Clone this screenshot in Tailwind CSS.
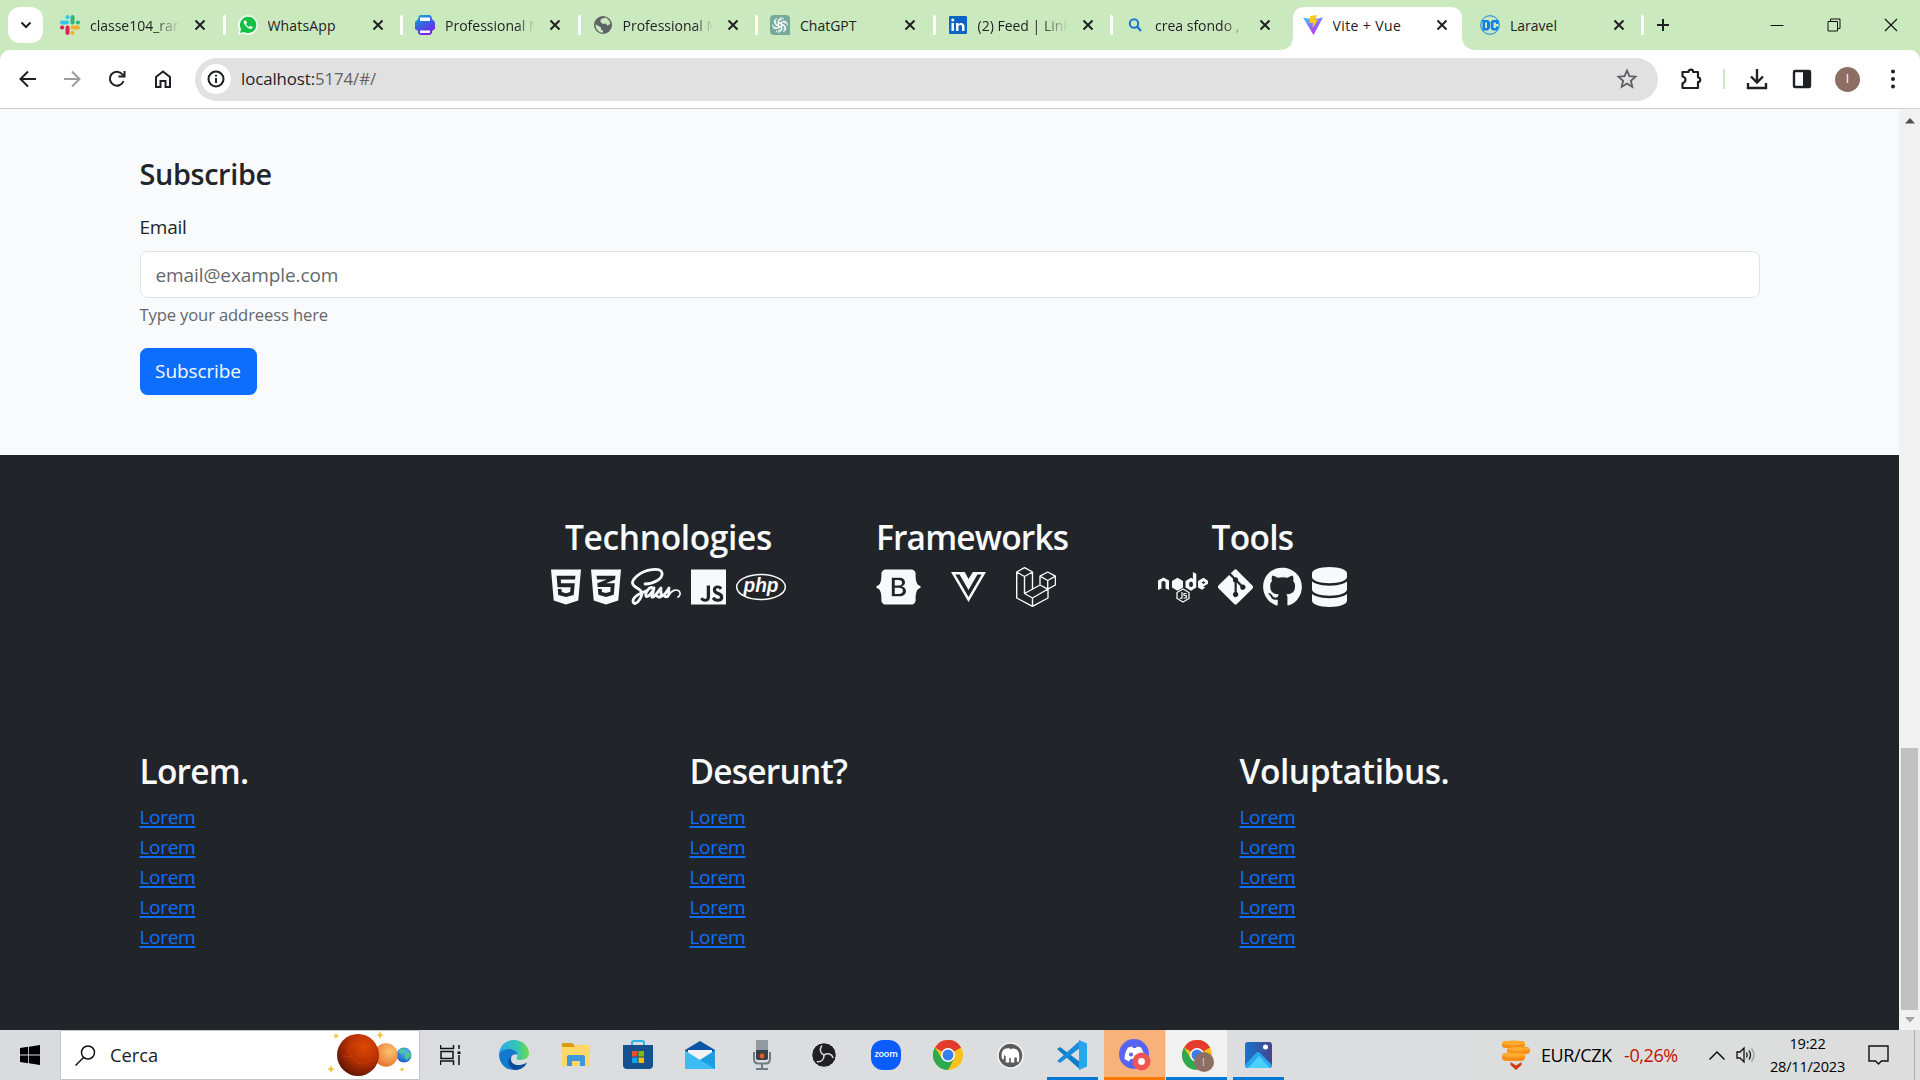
<!DOCTYPE html>
<html lang="it">
<head>
<meta charset="utf-8">
<title>Vite + Vue</title>
<script src="https://cdn.jsdelivr.net/npm/@tailwindcss/browser@4"></script>
</head>
<body class="w-[1920px] h-[1080px] overflow-hidden flex flex-col bg-white text-[#212529] font-['Open_Sans','Noto_Sans',sans-serif]">
<svg class="hidden">
  <defs>
    <symbol id="x" viewBox="0 0 12 12"><path d="M1.5 1.5l9 9M10.5 1.5l-9 9" stroke="#1f2023" stroke-width="2" fill="none"/></symbol>
    <symbol id="chrome" viewBox="0 0 30 30">
      <circle cx="15" cy="15" r="15" fill="#fbc116"/>
      <path d="M15 15L2 7.500A15 15 0 0 1 28 7.500z" fill="#e33b2e"/>
      <path d="M2 7.500A15 15 0 0 0 15 30L21.200 18.500 15 15 8.800 18.500z" fill="#2da94f"/>
      <path d="M15 8H28A15 15 0 0 0 15 0z" fill="#e33b2e"/>
      <circle cx="15" cy="15" r="7" fill="#fff"/><circle cx="15" cy="15" r="5.500" fill="#3b7ded"/>
    </symbol>
  </defs>
</svg>

<!-- Tab strip -->
<header class="relative h-[50px] shrink-0 bg-[#cbe9bf] flex items-center text-[14px] text-[#1f2023]">
  <svg class="absolute left-[1279px] top-0" width="198" height="50"><path d="M0 50Q14 50 14 36V19Q14 7 26 7H171Q183 7 183 19V36Q183 50 198 50z" fill="#fff"/></svg>
  <div class="ml-2 w-[35px] h-[36px] rounded-[12px] bg-white flex items-center justify-center"><svg width="12" height="8" viewBox="0 0 12 8"><path d="M1.500 1.500L6 6l4.500-4.500" fill="none" stroke="#1f2023" stroke-width="2"/></svg></div>
  <div class="ml-[3.500px] flex h-full items-center relative">
    <div class="w-[177.500px] flex items-center pl-[13.500px]">
      <svg width="20" height="20" viewBox="0 0 20 20" class="shrink-0"><g stroke-width="4" stroke-linecap="round"><path d="M2 7.500H7" stroke="#36c5f0"/><path d="M7.500 2V2.200" stroke="#36c5f0"/><path d="M12.500 2V7.500" stroke="#2eb67d"/><path d="M18 7.500H17.800" stroke="#2eb67d"/><path d="M12.500 12.500H18M12.500 18V17.800" stroke="#ecb22e"/><path d="M7.500 12.500V18M2 12.500H2.200" stroke="#e01e5a"/></g></svg>
      <span class="ml-[10px] w-[90px] overflow-hidden whitespace-nowrap mask-r-from-70%">classe104_random</span>
      <svg class="ml-[14px] shrink-0" width="12" height="12"><use href="#x"/></svg><i class="ml-auto -mr-[1.500px] w-[3px] h-5 rounded bg-white"></i>
    </div>
    <div class="w-[177.500px] flex items-center pl-[13.500px]">
      <svg width="20" height="20" viewBox="0 0 20 20" class="shrink-0"><path d="M0 20L1.300 14.900A9.800 9.800 0 1 1 5 18.600z" fill="#fff"/><path d="M2 18l1-4A8.200 8.200 0 1 1 6 17z" fill="#12c143"/><path d="M6.500 5.500c-1.500 1-.8 3.200 1.600 5.800 2.800 2.800 5.200 3.300 6.300 1.600l.2-1-2.200-1.100-1.200 1.200c-1.500-.6-2.700-1.800-3.200-3L9 7.800 8 5.500z" fill="#fff"/></svg>
      <span class="ml-[10px] w-[90px] overflow-hidden whitespace-nowrap tracking-[0.150px]">WhatsApp</span>
      <svg class="ml-[14px] shrink-0" width="12" height="12"><use href="#x"/></svg><i class="ml-auto -mr-[1.500px] w-[3px] h-5 rounded bg-white"></i>
    </div>
    <div class="w-[177.500px] flex items-center pl-[13.500px]">
      <svg width="20" height="20" viewBox="0 0 20 20" class="shrink-0"><defs><linearGradient id="pr" x1="0" y1="0" x2=".5" y2="1"><stop offset="0" stop-color="#14b8c9"/><stop offset=".5" stop-color="#3167e3"/><stop offset="1" stop-color="#7b24ea"/></linearGradient></defs><path d="M5 0H15Q17 1 17 4L20 7V14L17 16V18Q16 20 14 20H6Q4 20 3 18V16L0 14V7L3 4Q3 1 5 0z" fill="url(#pr)"/><path d="M5 2.500h10V6H5zM5 15.500h10V18H5z" fill="#fff"/></svg>
      <span class="ml-[10px] w-[90px] overflow-hidden whitespace-nowrap mask-r-from-80%">Professional Ma</span>
      <svg class="ml-[14px] shrink-0" width="12" height="12"><use href="#x"/></svg><i class="ml-auto -mr-[1.500px] w-[3px] h-5 rounded bg-white"></i>
    </div>
    <div class="w-[177.500px] flex items-center pl-[13.500px]">
      <svg width="20" height="20" viewBox="0 0 20 20" class="shrink-0"><circle cx="10" cy="10" r="9" fill="#5f6368"/><path d="M3 9.500l5 3v2l2 1v2.200A7.500 7.500 0 0 1 2.600 10zM8 4l5-1.500L16.500 6l.8 3-3 1.500-1.500-2-3 .5-2.500-2.500z" fill="#cbe9bf"/></svg>
      <span class="ml-[10px] w-[90px] overflow-hidden whitespace-nowrap mask-r-from-80%">Professional Ma</span>
      <svg class="ml-[14px] shrink-0" width="12" height="12"><use href="#x"/></svg><i class="ml-auto -mr-[1.500px] w-[3px] h-5 rounded bg-white"></i>
    </div>
    <div class="w-[177.500px] flex items-center pl-[13.500px]">
      <svg width="20" height="20" viewBox="0 0 20 20" class="shrink-0"><path d="M4 0H16Q20 0 20 4V20H4Q0 20 0 16V4Q0 0 4 0z" fill="#75a99c"/><g fill="none" stroke="#fff" stroke-width="1"><path id="petal" d="M8.500 11.500V5.800a3 3 0 0 1 5.500-1.500M8.500 8.700L12.500 6.500l3.500 2"/><use href="#petal" transform="rotate(60 10 10)"/><use href="#petal" transform="rotate(120 10 10)"/><use href="#petal" transform="rotate(180 10 10)"/><use href="#petal" transform="rotate(240 10 10)"/><use href="#petal" transform="rotate(300 10 10)"/></g></svg>
      <span class="ml-[10px] w-[90px] overflow-hidden whitespace-nowrap">ChatGPT</span>
      <svg class="ml-[14px] shrink-0" width="12" height="12"><use href="#x"/></svg><i class="ml-auto -mr-[1.500px] w-[3px] h-5 rounded bg-white"></i>
    </div>
    <div class="w-[177.500px] flex items-center pl-[13.500px]">
      <svg width="20" height="20" viewBox="0 0 20 20" class="shrink-0"><rect x="1" y="1" width="18" height="18" rx="1" fill="#0a66c2"/><path d="M3.500 8H6v8H3.500zM8 8h2.500v1.200C12.500 7 16.500 7.500 16.500 11.500V16H14v-4.200c0-2.400-3.500-2.400-3.500 0V16H8z" fill="#fff"/><circle cx="4.750" cy="5" r="1.500" fill="#fff"/></svg>
      <span class="ml-[10px] w-[90px] overflow-hidden whitespace-nowrap mask-r-from-70%">(2) Feed | LinkedIn</span>
      <svg class="ml-[14px] shrink-0" width="12" height="12"><use href="#x"/></svg><i class="ml-auto -mr-[1.500px] w-[3px] h-5 rounded bg-white"></i>
    </div>
    <div class="w-[177.500px] flex items-center pl-[13.500px]">
      <svg width="20" height="20" viewBox="0 0 20 20" class="shrink-0"><circle cx="9" cy="8.500" r="4.200" fill="none" stroke="#1a73d0" stroke-width="2"/><path d="M12 11.500l4 4.500" stroke="#1a73d0" stroke-width="2.200"/></svg>
      <span class="ml-[10px] w-[90px] overflow-hidden whitespace-nowrap mask-r-from-75%">crea sfondo , bi</span>
      <svg class="ml-[14px] shrink-0" width="12" height="12"><use href="#x"/></svg>
    </div>
    <div class="w-[177.500px] flex items-center pl-[13.500px]">
      <svg width="20" height="20" viewBox="0 0 20 20" class="shrink-0"><defs><linearGradient id="vt" x1="0" y1="0" x2=".6" y2="1"><stop offset="0" stop-color="#41c5ff"/><stop offset="1" stop-color="#c12bff"/></linearGradient></defs><path d="M0 2.500L10 4.500l10-2L10.500 20z" fill="url(#vt)"/><path d="M7 1l7-1-1.500 5H15l-5.500 8 .5-5H6.500z" fill="#ffc61c"/></svg>
      <span class="ml-[10px] w-[90px] overflow-hidden whitespace-nowrap tracking-[0.400px]">Vite + Vue</span>
      <svg class="ml-[13px] shrink-0" width="12" height="12"><use href="#x"/></svg>
    </div>
    <div class="w-[177px] flex items-center pl-[13.500px]">
      <svg width="20" height="20" viewBox="0 0 20 20" class="shrink-0"><circle cx="10" cy="10" r="9.300" fill="none" stroke="#1181e8" stroke-width="1"/><path d="M1.500 5H8l2 2V13L8 15.500H1.500l1-1.500V6.500zM12.500 5H18.500V9H16V7.500H13.500V13H16V11.500H18.500L17.500 15.500H12.500L10.700 13.500V7z" fill="#1181e8"/><path d="M5 7.500H7V13H5z" fill="#cbe9bf"/></svg>
      <span class="ml-[10px] w-[90px] overflow-hidden whitespace-nowrap">Laravel</span>
      <svg class="ml-[13px] shrink-0" width="12" height="12"><use href="#x"/></svg><i class="ml-auto w-[3px] h-5 rounded bg-white"></i>
    </div>
  </div>
  <svg class="ml-[12.500px]" width="14" height="14"><path d="M7 1V13M1 7H13" stroke="#1f2023" stroke-width="2"/></svg>
  <div class="ml-auto mr-[22px] flex items-center gap-[43px]">
    <svg width="14" height="14"><path d="M.5 7.500H13.500" stroke="#111"/></svg>
    <svg width="14" height="14" fill="none" stroke="#111"><path d="M1 3.500H10.500V13H1zM3.500 3V1H13V10.500H11"/></svg>
    <svg width="14" height="14"><path d="M1 1L13 13M13 1L1 13" stroke="#111" stroke-width="1.200"/></svg>
  </div>
</header>

<!-- Toolbar -->
<nav class="h-[59px] shrink-0 bg-[#cbe9bf]">
  <div class="h-full bg-white rounded-t-[10px] border-b border-[#cdd0ce] flex items-center pl-[18px] pr-[19px]">
    <svg width="20" height="20" fill="none" stroke="#1f2023" stroke-width="2"><path d="M18 10H3M10 2.500L2.500 10 10 17.500"/></svg>
    <svg class="ml-6" width="20" height="20" fill="none" stroke="#9c9c9c" stroke-width="2"><path d="M2 10H17M10 2.500L17.500 10 10 17.500"/></svg>
    <svg class="ml-[25px]" width="20" height="20" fill="none" stroke="#1f2023" stroke-width="2"><path d="M16.500 12A7 7 0 1 1 15.500 5.500L17 7"/><path d="M17.500 2V7.500H11.500" /></svg>
    <svg class="ml-[25.500px]" width="20" height="20" fill="none" stroke="#1f2023" stroke-width="2"><path d="M3 8L10 2.500 17 8V18H12.500V12H7.500V18H3z"/></svg>
    <div class="ml-[22.500px] w-[1463px] h-[43px] rounded-full bg-[#e1e1e1] flex items-center pl-[6px] pr-[20px]">
      <div class="w-[30px] h-[30px] rounded-full bg-white flex items-center justify-center"><svg width="18" height="18" fill="none" stroke="#1f2023" stroke-width="2"><circle cx="9" cy="9" r="7.500"/><path d="M9 8V13M9 4.800V6.500"/></svg></div>
      <span class="ml-[10px] text-[16.800px] tracking-[-0.070px] text-[#1f2023]">localhost:<span class="text-[#606264]">5174/#/</span></span>
      <svg class="ml-auto" width="22" height="22" viewBox="0 0 22 22"><path d="M11 2.500L13.400 8.200 19.500 8.700 14.900 12.800 16.300 18.900 11 15.600 5.700 18.900 7.100 12.800 2.500 8.700 8.600 8.200z" fill="none" stroke="#5c5e61" stroke-width="1.800"/></svg>
    </div>
    <svg class="ml-[21px]" width="24" height="24" viewBox="0 0 24 24"><path d="M4 5H9.500a2.300 2.300 0 0 1 4.600 0H19V10.500a2 2 0 0 1 0 4.500V21H3.500V16.200C7.500 15 7.500 10.500 3.500 9.500V5z" fill="none" stroke="#1f2023" stroke-width="2.200" stroke-linejoin="round"/></svg>
    <i class="ml-[20px] w-[2px] h-5 bg-[#cbe9bf]"></i>
    <svg class="ml-[21px]" width="22" height="22" fill="none" stroke="#1f2023" stroke-width="2.400"><path d="M11 1V14M5 8.500L11 14.500 17 8.500M2 15V20H20V15"/></svg>
    <svg class="ml-[24px]" width="20" height="20"><rect x="2" y="2" width="16" height="16" rx="1" fill="none" stroke="#1f2023" stroke-width="2.400"/><path d="M11 2H18V18H11z" fill="#1f2023"/></svg>
    <div class="ml-[23px] w-[25px] h-[25px] rounded-full bg-[#8d6e63] text-white text-[12px] flex items-center justify-center">I</div>
    <svg class="ml-auto" width="16" height="20" fill="#1f2023"><circle cx="8" cy="2.500" r="2"/><circle cx="8" cy="10" r="2"/><circle cx="8" cy="17.500" r="2"/></svg>
  </div>
</nav>

<div class="flex h-[921px] shrink-0">
  <main class="w-[1899px]">
    <section class="h-[346px] bg-[#f8fafc] pl-[139.500px] pr-[139.500px] pt-[47px] flex flex-col items-start">
      <h4 class="text-[28.800px] leading-[36px] font-semibold tracking-[-0.350px]">Subscribe</h4>
      <label class="mt-[20px] text-[19px] leading-[30px] tracking-[-0.250px]">Email</label>
      <input class="mt-[9px] w-full h-[47px] rounded-[7.500px] border border-[#dee2e6] bg-white px-[15px] text-[19px] tracking-[-0.100px] placeholder:text-[#63686c]" placeholder="email@example.com">
      <small class="mt-[4px] text-[16.600px] leading-[26px] tracking-[-0.130px] text-[#63686c]">Type your addreess here</small>
      <button class="mt-[20px] h-[47px] w-[117px] rounded-[7.500px] bg-[#0d6efd] text-[#f8fafc] text-[19px] tracking-[-0.100px]">Subscribe</button>
    </section>

    <footer class="h-[575px] bg-[#212529] text-[#f8f9fa]">
      <div class="flex pl-[551px] pt-[61px] h-[281px]">
        <div class="w-[235px] flex flex-col items-center">
          <h3 class="text-[33.500px] leading-[42px] font-semibold whitespace-nowrap tracking-[-0.350px]">Technologies</h3>
          <div class="mt-[9px] flex gap-[10px] fill-[#f8f9fa]">
            <svg width="30" height="40" viewBox="0 0 384 512"><path d="M0 32l34.9 395.8L191.5 480l157.600-52.200L384 32H0zm308.200 127.900H124.400l4.100 49.400h175.600l-13.600 148.400-97.900 27v.3h-1.100l-98.700-27.300-6-75.800h47.700L138 320l53.500 14.500 53.700-14.500 6-62.200H84.300L71.500 112.200h241.100l-4.400 47.700z"/></svg>
            <svg width="30" height="40" viewBox="0 0 384 512"><path d="M0 32l34.9 395.8L192 480l157.100-52.200L384 32H0zm313.100 80l-4.800 47.300L193 208.600l-.3.1h111.500l-12.800 146.600-98.200 28.700-98.800-29.200-6.400-73.900h48.900l3.200 38.300 52.600 13.300 54.700-15.400 3.700-61.600-166.300-.5v-.1l-.2.1-3.600-46.300L193.100 162l6.500-2.700H76.700L70.900 112h242.200z"/></svg>
            <svg width="50" height="40" viewBox="0 0 50 40" fill="none" stroke="#f8f9fa" stroke-linecap="round" stroke-linejoin="round"><path d="M14 17C22 17 32 12 31 6C30 0 14 2 6 9C-1 15 1 18 6 21C12 24 12 27 9 32C6 37 2 38 2 34C2 29 10 26 15 24" stroke-width="2.800"/><path d="M22 21C18 19 14 26 15 29C16 31 21 27 23 21L21 30C24 31 27 24 30 21C29 26 31 26 30 29C29 31 27 30 26 29M31 29C34 28 36 24 38 21C37 26 39 27 37 29C36 30 34 30 34 29" stroke-width="2.900"/><path d="M38 28C41 23 45 22 48 24C50 26 49 29 47 30" stroke-width="1.700"/></svg>
            <svg width="35" height="40" viewBox="0 0 448 512"><path d="M0 32v448h448V32H0zm243.800 349.400c0 43.600-25.600 63.500-62.900 63.500-33.700 0-53.200-17.400-63.200-38.500l34.300-20.700c6.600 11.700 12.600 21.600 27.100 21.600 13.800 0 22.600-5.400 22.600-26.500V237.700h42.100v143.700zm99.600 63.500c-39.100 0-64.400-18.600-76.700-43l34.300-19.800c9 14.700 20.800 25.600 41.500 25.600 17.400 0 28.600-8.700 28.600-20.800 0-14.400-11.400-19.500-30.700-28l-10.500-4.500c-30.400-12.900-50.500-29.200-50.500-63.500 0-31.600 24.100-55.600 61.600-55.600 26.800 0 46 9.300 59.800 33.700L368 290c-7.200-12.900-15-18-27.100-18-12.300 0-20.100 7.800-20.100 18 0 12.600 7.800 17.700 25.900 25.600l10.500 4.500c35.800 15.300 55.900 31 55.900 66.200 0 37.800-29.800 58.600-69.700 58.600z"/></svg>
            <svg width="50" height="40" viewBox="0 0 50 40"><ellipse cx="25" cy="20" rx="24.300" ry="12.500" fill="none" stroke="#f8f9fa" stroke-width="1.500"/><text x="7.500" y="24.500" textLength="35" lengthAdjust="spacingAndGlyphs" class="font-['Liberation_Sans',sans-serif] text-[20px] font-bold italic">php</text></svg>
          </div>
        </div>
        <div class="ml-[90px] w-[192px] flex flex-col items-start">
          <h3 class="text-[33.500px] leading-[42px] font-semibold whitespace-nowrap tracking-[-0.850px]">Frameworks</h3>
          <div class="mt-[9px] flex gap-[30px] fill-[#f8f9fa]">
            <svg width="45" height="40" viewBox="0 0 576 512"><path d="M333.500 201.400c0-22.100-15.600-34.300-43-34.300h-50.400v71.200h42.500C315.400 238.200 333.500 225 333.500 201.400zM517 188.600c-9.500-30.900-10.900-68.800-9.800-98.100 1.100-30.500-22.700-58.500-54.700-58.500H123.700c-32.100 0-55.800 28.100-54.700 58.500 1 29.300-.3 67.200-9.800 98.100-9.600 31-25.700 50.600-52.200 53.100v28.500c26.400 2.500 42.600 22.100 52.200 53.100 9.500 30.900 10.900 68.800 9.800 98.100-1.100 30.500 22.700 58.500 54.700 58.500h328.700c32.100 0 55.800-28.100 54.700-58.500-1-29.300.3-67.200 9.800-98.100 9.600-31 25.700-50.600 52.100-53.100v-28.500C542.700 239.200 526.500 219.600 517 188.600zM300.200 375.100h-97.900V136.800h97.400c43.300 0 71.700 23.400 71.700 59.400 0 25.300-19.100 47.900-43.500 51.800v1.300c33.200 3.600 55.500 26.600 55.500 58.300C383.400 349.700 352.100 375.100 300.200 375.100zM290.200 266.400h-50.100v78.400h52.300c34.200 0 52.300-13.700 52.300-39.500C344.700 279.600 326.100 266.400 290.200 266.400z"/></svg>
            <svg width="35" height="40" viewBox="0 0 448 512"><path d="M356.900 64.300H280l-56 88.600-48-88.600H0L224 448 448 64.300h-91.100zm-301.200 32h53.800L224 294.500 338.400 96.300h53.800L224 384.500 55.700 96.300z"/></svg>
            <svg width="40" height="40" viewBox="0 0 40 40" fill="none" stroke="#f8f9fa" stroke-width="1.400" stroke-linejoin="round"><path d="M.7 5L8.500.6 16.500 5 8.500 9.500zV31L16.500 39.400 32 31V22M8.500 9.500V26.500L16.500 31V39.400M16.500 5V22M8.500 26.500L24 18M16.500 31L32 22M24 9.200L31.700 5 39.400 9.200V18L31.700 22.200 24 18V9.200L31.700 13.500 39.400 9.200M31.700 13.500V22"/></svg>
          </div>
        </div>
        <div class="ml-[89.500px] w-[190px] flex flex-col items-center">
          <h3 class="text-[33.500px] leading-[42px] font-semibold whitespace-nowrap tracking-[-0.700px]">Tools</h3>
          <div class="mt-[9px] flex gap-[10px] fill-[#f8f9fa]">
            <svg width="50" height="40" viewBox="0 0 50 40"><path d="M0 23V13.500L5.500 10.500 11 13.500V23L7.500 21.500V15L5.500 13.700 3.500 15V21.500zM14 14L19.500 10.800 25 14V20.500L19.500 23.700 14 20.500zM27.500 14L33 10.800 34.900 12V5L38.300 6.800V20.500L33 23.700 27.500 20.500zM31.200 15.700V19L33 20.200 34.900 19V15.700L33 14.500zM40 14L45.500 10.800 50.500 14V16.500L45.500 19.500 47 20.700 44 22.800 40 20.500z" fill-rule="evenodd"/><path d="M43.500 15.500L45.500 14.300 47.500 15.500 45.500 17z" fill="#212529"/><path d="M25 22L31 25.500V31.500L25 35 19 31.500V25.500z" fill="#212529" stroke="#f8f9fa" stroke-width="1.300"/><path d="M24 25V30.500Q24 32 21.800 31M28.500 26.500H26V28.500H28.300V31H25.500" fill="none" stroke="#f8f9fa" stroke-width="1.200"/></svg>
            <svg width="35" height="40" viewBox="0 0 448 512"><path d="M439.550 236.050L244 40.450a28.870 28.870 0 0 0-40.810 0l-40.660 40.630 51.520 51.520c27.060-9.140 52.680 16.770 43.390 43.680l49.660 49.660c34.230-11.800 61.180 31 35.470 56.690-26.490 26.490-70.210-2.870-56-37.340L240.220 199v121.850c25.300 12.540 22.260 41.850 9.080 55a34.340 34.340 0 0 1-48.550 0c-17.570-17.600-11.070-46.910 11.250-56v-123c-20.800-8.510-24.600-30.740-18.640-45L142.570 101 8.450 235.140a28.860 28.860 0 0 0 0 40.810l195.610 195.600a28.860 28.860 0 0 0 40.800 0l194.690-194.690a28.860 28.860 0 0 0 0-40.810z"/></svg>
            <svg width="39" height="40" viewBox="0 0 496 512"><path d="M165.900 397.400c0 2-2.300 3.600-5.200 3.600-3.300.3-5.600-1.300-5.600-3.600 0-2 2.300-3.600 5.200-3.600 3-.3 5.600 1.300 5.600 3.600zm-31.100-4.500c-.7 2 1.300 4.300 4.300 4.900 2.600 1 5.600 0 6.200-2s-1.300-4.300-4.300-5.200c-2.600-.7-5.500.3-6.200 2.300zM244.800 8C106.100 8 0 113.300 0 252c0 110.900 69.800 205.800 169.500 239.200 12.800 2.300 17.300-5.600 17.300-12.100 0-6.200-.3-40.400-.3-61.400 0 0-70 15-84.700-29.800 0 0-11.400-29.100-27.800-36.600 0 0-22.900-15.700 1.600-15.400 0 0 24.900 2 38.600 25.800 21.900 38.600 58.600 27.500 72.900 20.900 2.300-16 8.800-27.100 16-33.700-55.900-6.200-112.300-14.300-112.300-110.500 0-27.500 7.600-41.300 23.600-58.900-2.600-6.500-11.100-33.300 2.600-67.900 20.900-6.500 69 27 69 27 20-5.600 41.500-8.500 62.800-8.500s42.800 2.900 62.800 8.500c0 0 48.100-33.600 69-27 13.700 34.700 5.200 61.400 2.600 67.900 16 17.700 25.800 31.500 25.800 58.900 0 96.500-58.900 104.200-114.800 110.500 9.200 7.900 17 22.900 17 46.400 0 33.700-.3 75.400-.3 83.600 0 6.500 4.600 14.400 17.300 12.100C428.200 457.800 496 362.900 496 252 496 113.300 383.500 8 244.800 8z"/></svg>
            <svg width="35" height="40" viewBox="0 0 448 512"><path d="M448 80v48c0 44.200-100.300 80-224 80S0 172.200 0 128V80C0 35.800 100.300 0 224 0S448 35.800 448 80zM393.200 214.700c20.800-7.400 39.900-16.900 54.800-28.600V288c0 44.200-100.300 80-224 80S0 332.200 0 288V186.100c14.900 11.800 34 21.200 54.800 28.600C99.700 230.700 159.500 240 224 240s124.300-9.300 169.200-25.300zM0 346.100c14.900 11.800 34 21.200 54.800 28.600C99.700 390.700 159.500 400 224 400s124.300-9.300 169.200-25.300c20.800-7.400 39.900-16.900 54.800-28.600V432c0 44.200-100.300 80-224 80S0 476.200 0 432V346.100z"/></svg>
          </div>
        </div>
      </div>
      <div class="grid grid-cols-3 w-[1650px] ml-[139.500px] pt-[14px]">
        <div>
          <h3 class="text-[33.500px] leading-[42px] font-semibold tracking-[-0.800px]">Lorem.</h3>
          <ul class="mt-[10px] text-[19px] leading-[30px] tracking-[-0.300px] text-[#0d6efd] underline decoration-2 underline-offset-2"><li>Lorem</li><li>Lorem</li><li>Lorem</li><li>Lorem</li><li>Lorem</li></ul>
        </div>
        <div>
          <h3 class="text-[33.500px] leading-[42px] font-semibold tracking-[-0.800px]">Deserunt?</h3>
          <ul class="mt-[10px] text-[19px] leading-[30px] tracking-[-0.300px] text-[#0d6efd] underline decoration-2 underline-offset-2"><li>Lorem</li><li>Lorem</li><li>Lorem</li><li>Lorem</li><li>Lorem</li></ul>
        </div>
        <div>
          <h3 class="text-[33.500px] leading-[42px] font-semibold tracking-[-0.450px]">Voluptatibus.</h3>
          <ul class="mt-[10px] text-[19px] leading-[30px] tracking-[-0.300px] text-[#0d6efd] underline decoration-2 underline-offset-2"><li>Lorem</li><li>Lorem</li><li>Lorem</li><li>Lorem</li><li>Lorem</li></ul>
        </div>
      </div>
    </footer>
  </main>
  <!-- Scrollbar -->
  <aside class="w-[21px] bg-[#f1f1f1] flex flex-col items-center">
    <svg class="mt-[9px]" width="10" height="6"><path d="M0 5.500L5 0 10 5.500z" fill="#505050"/></svg>
    <div class="mt-[624px] w-[17px] h-[262px] bg-[#c1c1c1]"></div>
    <svg class="mt-[7px]" width="10" height="6"><path d="M0 0H10L5 5.500z" fill="#a3a3a3"/></svg>
  </aside>
</div>

<!-- Taskbar -->
<div class="h-[50px] shrink-0 flex items-center bg-linear-to-r from-[#d9dbdf] via-[#dcdddf] to-[#dcdddc] text-black">
  <svg class="ml-5" width="20" height="20"><path d="M0 3L8.200 1.800V9.500H0zM9 1.700L20 0V9.500H9zM0 10.500H8.200V18.200L0 17zM9 10.500H20V20L9 18.300z"/></svg>
  <div class="ml-5 w-[360px] h-[50px] bg-white border border-[#c4c5c8] flex items-center pl-[14px]">
    <svg width="21" height="21" fill="none" stroke="#111" stroke-width="1.500"><circle cx="13" cy="7.500" r="6.500"/><path d="M8.500 12.500L.5 20.500"/></svg>
    <span class="ml-[14px] text-[18.300px] text-[#1c1c1c]">Cerca</span>
    <svg class="ml-auto mr-[5px]" width="88" height="48" viewBox="0 0 88 48">
      <defs><radialGradient id="p1" cx=".65" cy=".3" r=".8"><stop offset="0" stop-color="#e04a05"/><stop offset=".5" stop-color="#b52f02"/><stop offset="1" stop-color="#501204"/></radialGradient><radialGradient id="p2" cx=".65" cy=".35" r=".7"><stop offset="0" stop-color="#ffc573"/><stop offset="1" stop-color="#e4722c"/></radialGradient><radialGradient id="p3" cx=".6" cy=".3" r=".7"><stop offset="0" stop-color="#55b8f5"/><stop offset="1" stop-color="#1c63c5"/></radialGradient></defs>
      <circle cx="78" cy="24" r="7.500" fill="url(#p3)"/><path d="M73 19l4-2 2 3-3 3-3-1zM79 23l5-2 1 4-4 4-2-2z" fill="#4bc98b"/>
      <circle cx="60" cy="24" r="11.700" fill="url(#p2)"/><circle cx="32" cy="24" r="21" fill="url(#p1)"/>
      <path d="M24 10L34 14 40 9M17 25L26 26 34 33 47 29M27 12L22 20 26 26" fill="none" stroke="#d1450d" stroke-width="1.200" opacity=".5"/>
      <path d="M10 2l1 2 2 1-2 1-1 2-1-2-2-1 2-1zM54 0l1.200 3 2.500 1-2.500 1.200L54 8l-1.200-2.800L50.300 4l2.500-1zM5 34l1.200 3 2.800 1-2.800 1.200L5 42l-1.200-2.800L1 38l2.800-1zM76 36l.8 1.700 1.800.8-1.800.8L76 41l-.8-1.700-1.800-.8 1.800-.8z" fill="#efc342"/>
    </svg>
  </div>
  <svg class="ml-5" width="21" height="20" fill="none" stroke="#111" stroke-width="1.500"><path d="M.5 0V3.500H13.500V0M1 6.500H13V13.500H1zM.5 20V16H13.500V20M19 0V4M19 10V20"/><path d="M17.500 6.500H20.500V9H17.500z" fill="#111" stroke="none"/></svg>

  <div class="ml-[22px] flex h-full items-center">
    <div class="w-[62px] flex justify-center"><svg width="30" height="30" viewBox="0 0 30 30"><defs><linearGradient id="e1" x1="0" x2="1"><stop offset="0" stop-color="#29a9e8"/><stop offset=".6" stop-color="#35c5b5"/><stop offset="1" stop-color="#70dc48"/></linearGradient></defs><path d="M0 14C1 5 7 0 15 0 24 0 30 7 30 13 30 18 26 20 21 20 17 20 17 18 18.500 16 19 12 15 9 10 9 5 9 2 11 0 14z" fill="url(#e1)"/><path d="M0 14C2 10 6 9 10 9 15 9 19 12 18.500 15 16 13 12 15 12 19 12 25 19 28 27 24 23 29 18 30 15 30 6 30 0 23 0 14z" fill="#1279cf"/><path d="M12 17C10 24 18 28 28 22.500 25 29 19 30 16 30 9 27 7 20 12 17z" fill="#0c4f97"/></svg></div>
    <div class="w-[62px] flex justify-center"><svg width="28" height="24" viewBox="0 0 28 24"><path d="M0 0H10L13 3V8H0z" fill="#dc9a0f"/><path d="M0 4H12L14 2H28V23H0z" fill="#ffd869"/><path d="M5 23V14Q5 12 7 12H21Q23 12 23 14V23H18V18H10V23z" fill="#3d97db"/></svg></div>
    <div class="w-[62px] flex justify-center"><svg width="30" height="30" viewBox="0 0 30 30"><path d="M9 6V3Q9 1 11 1H19Q21 1 21 3V6" fill="none" stroke="#29b6ee" stroke-width="2"/><path d="M0 5H30V25Q30 29 26 29H4Q0 29 0 25z" fill="#15508f"/><path d="M9 11h5.500v5.500H9z" fill="#f04e24"/><path d="M15.500 11H21v5.500h-5.500z" fill="#80bc06"/><path d="M9 17.500h5.500V23H9z" fill="#05a6f0"/><path d="M15.500 17.500H21V23h-5.500z" fill="#ffb901"/></svg></div>
    <div class="w-[62px] flex justify-center"><svg width="30" height="28" viewBox="0 0 30 28"><path d="M0 9L15 0 30 9V14H0z" fill="#0a56a5"/><path d="M3 9H27V18L15 22 3 17z" fill="#f3f3f5"/><path d="M0 9.500L15 19 30 9.500V28H0z" fill="#3cbcf3"/><path d="M15 19L30 28V9.500z" fill="#1d9de0"/></svg></div>
    <div class="w-[62px] flex justify-center"><svg width="18" height="30" viewBox="0 0 18 30"><path d="M3 0H15V12H3z" fill="#909aa3"/><path d="M3 10H15V18Q15 20 13 20H5Q3 20 3 18z" fill="#38414a"/><path d="M1 12V19Q1 23.500 5.500 23.500H12.500Q17 23.500 17 19V12M9 23.500V28M3 29H15" fill="none" stroke="#6f7c85" stroke-width="2"/><circle cx="9" cy="16" r="2.400" fill="#ef5b22"/></svg></div>
    <div class="w-[62px] flex justify-center"><svg width="26" height="26" viewBox="0 0 26 26"><circle cx="13" cy="13" r="12.300" fill="#202022" stroke="#f2f2f2" stroke-width="1"/><g fill="none" stroke="#d7d7d7" stroke-width="1.500"><path d="M13 13C9 11 8 7 11 3.500"/><path d="M13 13C9 11 8 7 11 3.500" transform="rotate(120 13 13)"/><path d="M13 13C9 11 8 7 11 3.500" transform="rotate(240 13 13)"/></g></svg></div>
    <div class="w-[62px] flex justify-center"><div class="w-[30px] h-[30px] rounded-[12px] bg-[#0b5cff] text-white text-[9px] leading-[27px] tracking-[-0.200px] font-semibold text-center">zoom</div></div>
    <div class="w-[62px] flex justify-center"><svg width="30" height="30"><use href="#chrome"/></svg></div>
    <div class="w-[62px] flex justify-center"><svg width="27" height="27" viewBox="0 0 27 27"><circle cx="13.500" cy="13.500" r="12.500" fill="#5c5c5c" stroke="#f5f5f5" stroke-width="1.500"/><path d="M4.800 16C4 10 6 6.500 10 6.500 12 6 13 6 13.500 7.500 15 6 19 6 21 9 22.500 11 22.500 16 22 19.500Q21 21 19.800 19.500V15.500H17.300V20.500H13.800V16H12.200V20.500H8.700V14.500Q7.500 14 7 12 6.800 14 7 16.500 6 18.500 4.800 16z" fill="#fff"/></svg></div>
    <div class="w-[62px] h-full flex items-center justify-center relative"><svg width="30" height="30" viewBox="0 0 30 30"><path d="M0 9L3 7 23 22V29.500z" fill="#0f7ec8"/><path d="M0 21L3 23 23 8V.5z" fill="#1a8cd8"/><path d="M22 0L30 3.500V26.500L22 30z" fill="#29a5f0"/></svg><i class="absolute bottom-0 w-[51px] h-[3px] bg-[#0078d4]"></i></div>
    <div class="ml-[1px] w-[61px] h-full bg-[#f9b17a] border-b-[3px] border-[#ff7800] flex items-center justify-center pt-[3px]"><svg width="32" height="32" viewBox="0 0 32 32"><circle cx="15" cy="15" r="15" fill="#5865f2"/><path d="M9 8.500L13 7.500 14 9H17L18 7.500 22 8.500Q25.500 14 25.500 20L21 22.500 19.500 20H11.500L10 22.500 5.500 20Q5.500 14 9 8.500z" fill="#fff"/><circle cx="12" cy="15.500" r="2" fill="#5865f2"/><circle cx="22.500" cy="22.500" r="9" fill="#f05455"/><circle cx="22.500" cy="22.500" r="3.400" fill="#fff"/></svg></div>
    <div class="ml-[1px] w-[61px] h-full bg-[#f1f1f1] border-b-[3px] border-[#0078d4] flex items-center justify-center pt-[3px]"><div class="relative"><svg width="30" height="30"><use href="#chrome"/></svg><div class="absolute left-[12px] top-[12px] w-5 h-5 rounded-full bg-[#8d6e63] text-[#d9cdc9] text-[10px] leading-5 text-center">I</div></div></div>
    <div class="w-[62px] h-full flex items-center justify-center relative"><svg width="27" height="26" viewBox="0 0 27 26"><defs><linearGradient id="ph" x1="0" x2="1"><stop offset="0" stop-color="#1775cc"/><stop offset="1" stop-color="#46458f"/></linearGradient></defs><rect width="27" height="26" rx="3" fill="url(#ph)"/><path d="M0 23L11 11Q13 9 15 11L27 23Q26 26 24 26H3Q0 26 0 23z" fill="#2aa8ee"/><path d="M3 26L14 14 25 26z" fill="#4bd0fb"/><circle cx="20.500" cy="5" r="2.500" fill="#fff"/></svg><i class="absolute bottom-0 w-[51px] h-[3px] bg-[#0078d4]"></i></div>
  </div>

  <div class="ml-auto flex h-full items-center">
    <svg width="28" height="30" viewBox="0 0 28 30"><g fill="#f78e16"><rect y="1" width="23" height="7" rx="3.500"/><rect x="5" y="7" width="23" height="7" rx="3.500"/><rect y="13" width="23" height="8" rx="4"/></g><g fill="#ffab2d"><ellipse cx="11.500" cy="3" rx="11.500" ry="2.500"/><ellipse cx="16.500" cy="9" rx="11.500" ry="2"/><ellipse cx="11.500" cy="15" rx="11.500" ry="2.500"/></g><path d="M8.500 22L14 25.500 19.500 22V25L14 30 8.500 25z" fill="#ce3b15"/></svg>
    <span class="ml-[11px] w-[72px] text-[18px] tracking-[-0.400px] whitespace-nowrap">EUR/CZK</span>
    <span class="ml-[11px] w-[55px] text-[18px] tracking-[-0.400px] whitespace-nowrap text-[#c01404]">-0,26%</span>
    <svg class="ml-[29px]" width="18" height="12" fill="none" stroke="#111" stroke-width="1.500"><path d="M1.500 10.500L9 3 16.500 10.500"/></svg>
    <svg class="ml-[10px]" width="21" height="18" fill="none" stroke="#111" stroke-width="1.300"><path d="M1 6H4L8 2V16L4 12H1zM10.500 6.500Q12 9 10.500 11.500M13 4.500Q16 9 13 13.500"/><path d="M15.500 2.500Q20.500 9 15.500 15.500" stroke="#999"/></svg>
    <div class="ml-[12px] w-[77px] text-[14.600px] tracking-[-0.250px] leading-[23px] text-center whitespace-nowrap">19:22<br>28/11/2023</div>
    <svg class="ml-[22px]" width="21" height="20" fill="none" stroke="#111" stroke-width="1.400"><path d="M1 1H20V16H13.500L10.500 19 7.500 16H1z"/></svg>
    <i class="ml-[25px] mr-[5px] w-px h-full bg-[#aaa]"></i>
  </div>
</div>
</body>
</html>
